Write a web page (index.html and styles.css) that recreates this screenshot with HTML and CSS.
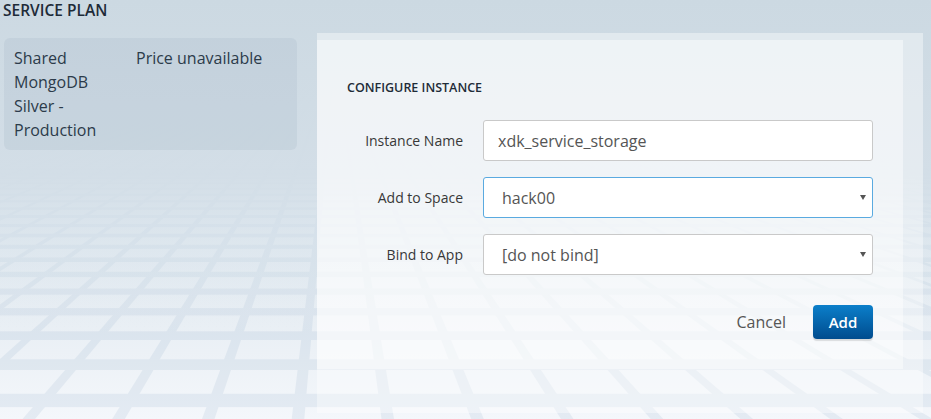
FILE: index.html
```html
<!DOCTYPE html>
<html lang="en">
<head>
<meta charset="utf-8">
<title>Configure Instance</title>
<link rel="stylesheet" href="styles.css">
</head>
<body>
<svg class="backdrop" viewBox="0 0 931 419" preserveAspectRatio="none" aria-hidden="true">
  <defs>
    <linearGradient id="floor" x1="0" y1="0" x2="0" y2="1">
      <stop offset="0" stop-color="#ccd9e2"/>
      <stop offset="0.4" stop-color="#d6e1e9"/>
      <stop offset="1" stop-color="#f4f7fb"/>
    </linearGradient>
    <linearGradient id="fade" x1="0" y1="0" x2="0" y2="1">
      <stop offset="0" stop-color="#ccd9e2" stop-opacity="1"/>
      <stop offset="0.42" stop-color="#d3dee7" stop-opacity="0.95"/>
      <stop offset="0.6" stop-color="#dce6ee" stop-opacity="0.45"/>
      <stop offset="0.8" stop-color="#e8eef4" stop-opacity="0"/>
    </linearGradient>
  </defs>
  <rect width="931" height="419" fill="url(#floor)"/>
  <g fill="#789bbe" opacity="0.12">
    <path d="M335 60L-785.3 419L-772.7 419Z M335 60L-695.6 419L-683 419Z M335 60L-605.8 419L-593.2 419Z M335 60L-516 419L-503.5 419Z M335 60L-426.3 419L-413.7 419Z M335 60L-336.6 419L-324 419Z M335 60L-246.8 419L-234.2 419Z M335 60L-157 419L-144.5 419Z M335 60L-67.3 419L-54.7 419Z M335 60L22.5 419L35 419Z M335 60L112.2 419L124.8 419Z M335 60L202 419L214.5 419Z M335 60L291.7 419L304.3 419Z M335 60L381.5 419L394 419Z M335 60L471.2 419L483.8 419Z M335 60L561 419L573.5 419Z M335 60L650.7 419L663.3 419Z M335 60L740.5 419L753 419Z M335 60L830.2 419L842.8 419Z M335 60L920 419L932.5 419Z M335 60L1009.7 419L1022.3 419Z M335 60L1099.5 419L1112 419Z M335 60L1189.2 419L1201.8 419Z M335 60L1279 419L1291.5 419Z M335 60L1368.7 419L1381.3 419Z M335 60L1458.5 419L1471 419Z M335 60L1548.2 419L1560.8 419Z M335 60L1638 419L1650.5 419Z M335 60L1727.7 419L1740.3 419Z M335 60L1817.5 419L1830 419Z M335 60L1907.2 419L1919.8 419Z M335 60L1997 419L2009.5 419Z M335 60L2086.7 419L2099.3 419Z M335 60L2176.5 419L2189 419Z M335 60L2266.2 419L2278.8 419Z"/>
    <rect x="0" y="393.8" width="931" height="13.3"/>
    <rect x="0" y="359.3" width="931" height="10.7"/>
    <rect x="0" y="331.3" width="931" height="8.7"/>
    <rect x="0" y="308.1" width="931" height="7.3"/>
    <rect x="0" y="288.5" width="931" height="6.2"/>
    <rect x="0" y="271.8" width="931" height="5.3"/>
    <rect x="0" y="257.4" width="931" height="4.6"/>
    <rect x="0" y="244.8" width="931" height="4.0"/>
    <rect x="0" y="233.7" width="931" height="3.6"/>
    <rect x="0" y="223.9" width="931" height="3.2"/>
    <rect x="0" y="215.1" width="931" height="2.9"/>
    <rect x="0" y="207.3" width="931" height="2.5"/>
    <rect x="0" y="200.1" width="931" height="2.3"/>
    <rect x="0" y="193.7" width="931" height="2.1"/>
    <rect x="0" y="187.8" width="931" height="1.9"/>
    <rect x="0" y="182.4" width="931" height="1.7"/>
    <rect x="0" y="177.4" width="931" height="1.6"/>
    <rect x="0" y="172.9" width="931" height="1.4"/>
    <rect x="0" y="168.7" width="931" height="1.3"/>
  </g>
  <rect width="931" height="419" fill="url(#fade)"/>
</svg>

<div class="page">
  <aside class="plan">
    <h2 class="plan-title">SERVICE PLAN</h2>
    <div class="plan-card">
      <div class="plan-name">Shared MongoDB Silver - Production</div>
      <div class="plan-price">Price unavailable</div>
    </div>
  </aside>

  <section class="config-shell">
    <div class="config">
      <h3 class="config-title">CONFIGURE INSTANCE</h3>
      <form class="form">
        <label class="field-label" for="inst-name">Instance Name</label>
        <input class="field" id="inst-name" type="text" value="xdk_service_storage">

        <label class="field-label" for="inst-space">Add to Space</label>
        <div class="select-wrap">
          <select class="field field-select is-focused" id="inst-space">
            <option>hack00</option>
          </select>
        </div>

        <label class="field-label" for="inst-app">Bind to App</label>
        <div class="select-wrap">
          <select class="field field-select" id="inst-app">
            <option>[do not bind]</option>
          </select>
        </div>
      </form>
      <div class="actions">
        <button class="btn-cancel" type="button">Cancel</button>
        <button class="btn-add" type="button">Add</button>
      </div>
    </div>
  </section>
</div>
</body>
</html>
```

FILE: styles.css
```css
* {
  box-sizing: border-box;
}

html,
body {
  margin: 0;
  height: 100%;
}

body {
  position: relative;
  overflow: hidden;
  background: #ccd9e2;
  font-family: "Open Sans", "Liberation Sans", sans-serif;
  color: #2b3a48;
}

.backdrop {
  position: absolute;
  left: 0;
  top: 0;
  width: 100%;
  height: 100%;
  z-index: 0;
  display: block;
}

.page {
  position: relative;
  z-index: 1;
  display: flex;
  align-items: flex-start;
}

/* ---------- left: service plan ---------- */
.plan {
  width: 297px;
  flex: none;
}

.plan-title {
  margin: 0;
  padding-left: 3px;
  font-size: 15.5px;
  line-height: 21px;
  font-weight: 600;
  color: #1e2b38;
}

.plan-card {
  margin: 17px 0 0 4px;
  padding: 8px 10px 8px;
  border-radius: 6px;
  background: rgba(140, 160, 180, 0.15);
  display: grid;
  grid-template-columns: 112px 1fr;
  column-gap: 10px;
  font-size: 16px;
  line-height: 24px;
  color: #2c3b4a;
}

/* ---------- right: configure instance ---------- */
.config-shell {
  margin: 33px 0 0 20px;
  width: 606px;
  flex: none;
  padding: 7px 20px 44px 0;
  background: rgba(255, 255, 255, 0.4);
}

.config {
  padding: 38px 30px 30px;
  background: rgba(255, 255, 255, 0.45);
}

.config-title {
  margin: 0 0 22px;
  font-size: 12.5px;
  line-height: 20px;
  font-weight: 600;
  color: #1e2b38;
}

.form {
  display: grid;
  grid-template-columns: 116px 390px;
  column-gap: 20px;
  row-gap: 16px;
  align-items: center;
}

.field-label {
  text-align: right;
  font-size: 14px;
  color: #383838;
}

.field {
  display: block;
  width: 100%;
  height: 41px;
  margin: 0;
  padding: 0 14px;
  border: 1px solid #c9c9c9;
  border-radius: 3px;
  background: #fff;
  font-family: "Open Sans", "Liberation Sans", sans-serif;
  font-size: 16px;
  color: #555;
  outline: none;
}

.select-wrap {
  position: relative;
}

.select-wrap::after {
  content: "";
  position: absolute;
  right: 7px;
  top: 18px;
  border-left: 3px solid transparent;
  border-right: 3px solid transparent;
  border-top: 5px solid #555;
  pointer-events: none;
}

.field-select {
  -webkit-appearance: none;
  appearance: none;
  padding-left: 18px;
}

.field-select.is-focused {
  border-color: #5aaae0;
}

.actions {
  margin-top: 30px;
  display: flex;
  justify-content: flex-end;
  align-items: center;
  gap: 27px;
}

.btn-cancel {
  padding: 0;
  border: 0;
  background: none;
  font-family: "Open Sans", "Liberation Sans", sans-serif;
  font-size: 16px;
  color: #555;
  cursor: pointer;
}

.btn-add {
  width: 60px;
  height: 34px;
  padding: 0;
  border: 0;
  border-radius: 4px;
  background: linear-gradient(#0b7fca, #004c8e);
  box-shadow: 0 2px 1px rgba(0, 0, 0, 0.12);
  font-family: "Open Sans", "Liberation Sans", sans-serif;
  font-size: 15px;
  font-weight: 600;
  color: #fff;
  cursor: pointer;
}
```
